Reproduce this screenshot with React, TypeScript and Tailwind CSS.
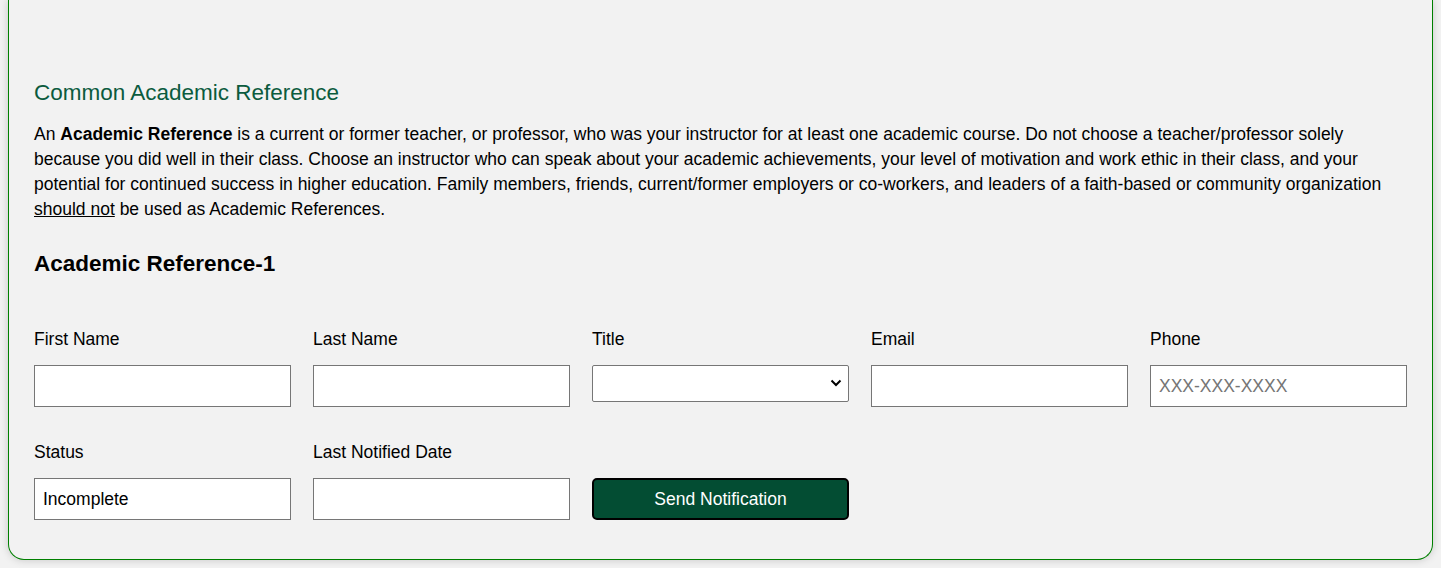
import React from "react";

const inputCls =
  "block w-full h-[42px] bg-white border border-[#767676] px-2 text-[17.5px] text-black outline-none placeholder:text-[#757575]";

function Field({
  label,
  gap,
  children,
}: {
  label: string;
  gap: string;
  children: React.ReactNode;
}) {
  return (
    <div className="flex flex-col">
      <label className={"text-[17.5px] leading-[20px] text-black " + gap}>{label}</label>
      {children}
    </div>
  );
}

export default function App() {
  return (
    <div
      className="min-h-[568px] bg-[#f2f2f2] px-2 text-black"
      style={{ fontFamily: '"Liberation Sans", Arial, sans-serif' }}
    >
      <div className="bg-[#f2f2f2] border-x border-b border-[#008000] rounded-b-[16px] shadow-[0_0_8px_rgba(0,0,0,0.18)] px-[25px] pt-[80px] pb-[39px]">
        <h2 className="text-[22.5px] leading-[26px] text-[#0b5b3e] font-normal">
          Common Academic Reference
        </h2>
        <p className="mt-[16px] text-[17.5px] leading-[25px]">
          An <b>Academic Reference</b> is a current or former teacher, or professor, who was your instructor for at least one academic course. Do not choose a teacher/professor solely because you did well in their class. Choose an instructor who can speak about your academic achievements, your level of motivation and work ethic in their class, and your potential for continued success in higher education. Family members, friends, current/former employers or co-workers, and leaders of a faith-based or community organization <u>should not</u> be used as Academic References.
        </p>
        <h3 className="mt-[28px] text-[22.5px] leading-[27px] font-bold">Academic Reference-1</h3>

        <div className="mt-[52px] grid grid-cols-5 gap-x-[22px]">
          <Field label="First Name" gap="mb-[16px]">
            <input className={inputCls} />
          </Field>
          <Field label="Last Name" gap="mb-[16px]">
            <input className={inputCls} />
          </Field>
          <Field label="Title" gap="mb-[16px]">
            <div className="relative">
              <select className="block w-full h-[37px] appearance-none bg-white border border-[#767676] rounded-[2px] px-2 text-[17.5px] outline-none">
                <option></option>
              </select>
              <svg
                className="absolute right-[7px] top-[14px] pointer-events-none"
                width="12"
                height="8"
                viewBox="0 0 12 8"
              >
                <path d="M1.5 1.5 L6 6 L10.5 1.5" fill="none" stroke="#000" strokeWidth="2" />
              </svg>
            </div>
          </Field>
          <Field label="Email" gap="mb-[16px]">
            <input className={inputCls} />
          </Field>
          <Field label="Phone" gap="mb-[16px]">
            <input className={inputCls} placeholder="XXX-XXX-XXXX" />
          </Field>
        </div>

        <div className="mt-[35px] grid grid-cols-5 gap-x-[22px]">
          <Field label="Status" gap="mb-[16px]">
            <input className={inputCls} defaultValue="Incomplete" />
          </Field>
          <Field label="Last Notified Date" gap="mb-[16px]">
            <input className={inputCls} />
          </Field>
          <div className="flex flex-col justify-end">
            <button className="h-[42px] w-full rounded-[5px] border-2 border-black bg-[#034d33] text-white text-[17.5px]">
              Send Notification
            </button>
          </div>
        </div>
      </div>
    </div>
  );
}
